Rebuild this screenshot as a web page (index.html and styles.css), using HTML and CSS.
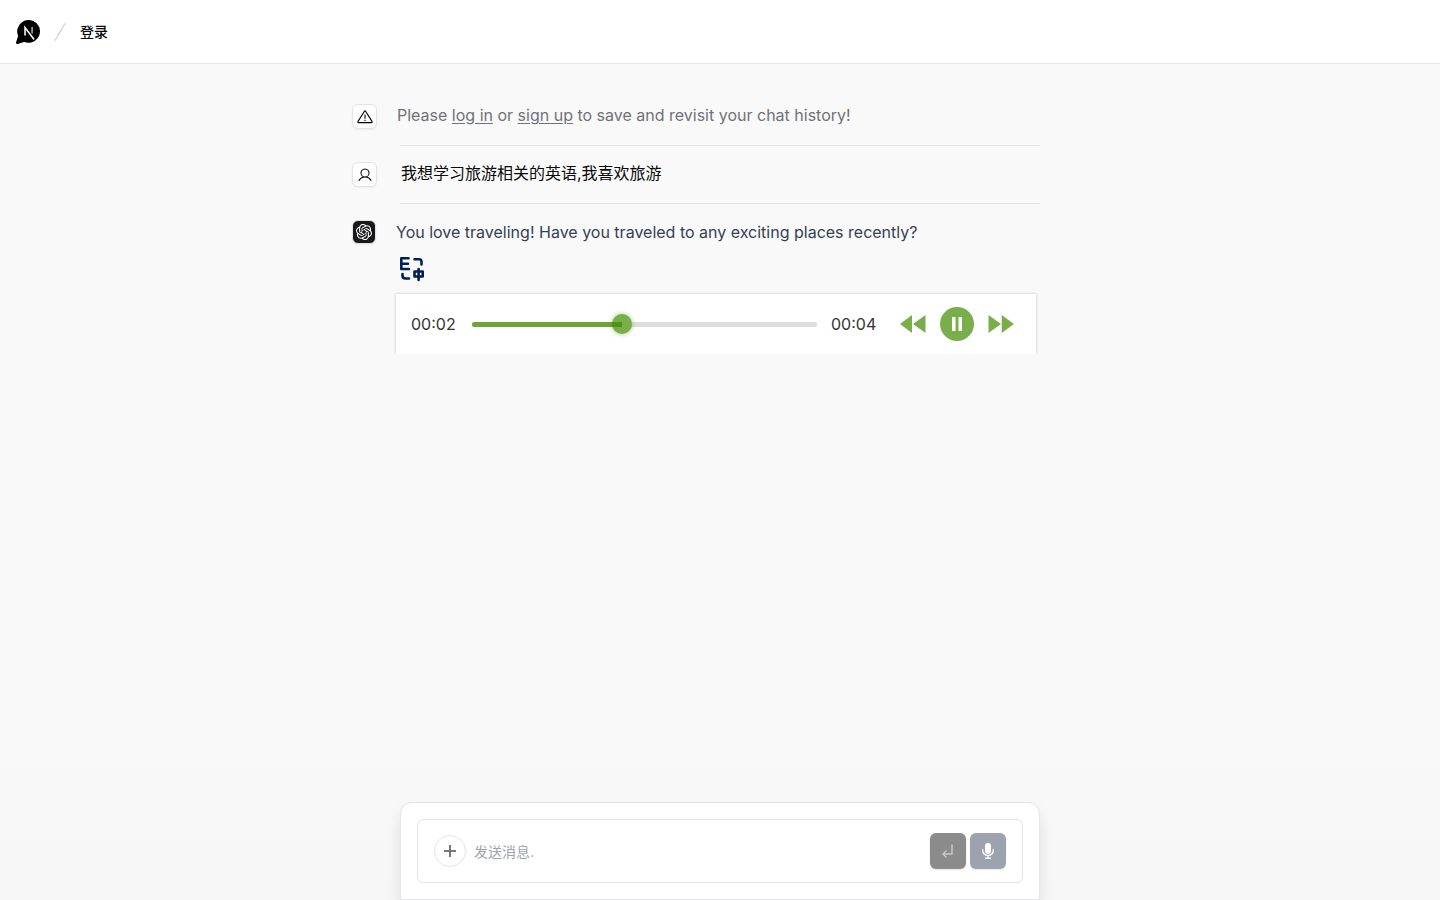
FILE: index.html
```html
<!DOCTYPE html>
<html lang="zh">
<head>
  <meta charset="UTF-8" />
  <meta name="viewport" content="width=device-width, initial-scale=1.0" />
  <title>Chat</title>
  <link rel="stylesheet" href="styles.css">
</head>
<body>
  <header class="header">
    <a href="#" class="logo" aria-label="Home">
      <svg viewBox="0 0 17 17" width="24" height="24">
        <path d="M1 16L2.58314 11.2506C1.83084 9.74642 1.63835 8.02363 2.04013 6.39052C2.4419 4.75741 3.41171 3.32057 4.776 2.33712C6.1403 1.35367 7.81003 0.887808 9.4864 1.02289C11.1628 1.15798 12.7364 1.8852 13.9256 3.07442C15.1148 4.26363 15.842 5.83723 15.9771 7.5136C16.1122 9.18997 15.6463 10.8597 14.6629 12.224C13.6794 13.5883 12.2426 14.5581 10.6095 14.9599C8.97637 15.3616 7.25358 15.1692 5.74942 14.4169L1 16Z" fill="#000" stroke="#000" stroke-width="2" stroke-linecap="round" stroke-linejoin="round"/>
        <path d="M6.4 11V5.4L12.8 13.8" fill="none" stroke="#fff" stroke-width="1.1"/>
        <path d="M11.4 5v4.600" stroke="#aaa" stroke-width="1.1"/>
      </svg>
    </a>
    <svg class="separator" viewBox="0 0 24 24" width="24" height="24">
      <path d="M16.88 3.549L7.12 20.451" stroke="#c3c3c7" stroke-width="1" stroke-linecap="round"/>
    </svg>
    <a href="#" class="login">登录</a>
  </header>

  <main class="chat">
    <div class="message">
      <div class="avatar">
        <svg viewBox="0 0 16 16" width="16" height="16" fill="none" stroke="#000" stroke-width="1.1" stroke-linejoin="round">
          <path d="M7.4 2.2 1 12.400Q.5 13.600 1.700 13.600H14.300Q15.500 13.600 15 12.400L8.600 2.200Q8 1.400 7.400 2.200Z"/>
          <path d="M8 5.500v4.300M8 10.800v1.300"/>
        </svg>
      </div>
      <p class="text muted">Please <a href="#">log in</a> or <a href="#">sign up</a> to save and revisit your chat history!</p>
    </div>
    <hr class="line">
    <div class="message">
      <div class="avatar">
        <svg viewBox="0 0 256 256" width="16" height="16">
          <path d="M230.92 212c-15.23-26.33-38.7-45.21-66.09-54.16a72 72 0 1 0-73.66 0c-27.39 8.94-50.86 27.82-66.09 54.16a8 8 0 1 0 13.85 8c18.84-32.56 52.14-52 89.07-52s70.23 19.44 89.07 52a8 8 0 1 0 13.85-8ZM72 96a56 56 0 1 1 56 56 56.06 56.06 0 0 1-56-56Z"/>
        </svg>
      </div>
      <p class="text question">我想学习旅游相关的英语,我喜欢旅游</p>
    </div>
    <hr class="line">
    <div class="message">
      <div class="avatar bot">
        <svg viewBox="0 0 24 24" width="16" height="16" fill="#fff">
          <path d="M22.2819 9.8211a5.9847 5.9847 0 0 0-.5157-4.9108 6.0462 6.0462 0 0 0-6.5098-2.9A6.0651 6.0651 0 0 0 4.9807 4.1818a5.9847 5.9847 0 0 0-3.9977 2.9 6.0462 6.0462 0 0 0 .7427 7.0966 5.98 5.98 0 0 0 .511 4.9107 6.051 6.051 0 0 0 6.5146 2.9001A5.9847 5.9847 0 0 0 13.2599 24a6.0557 6.0557 0 0 0 5.7718-4.2058 5.9894 5.9894 0 0 0 3.9977-2.9001 6.0557 6.0557 0 0 0-.7475-7.0729zm-9.022 12.6081a4.4755 4.4755 0 0 1-2.8764-1.0408l.1419-.0804 4.7783-2.7582a.7948.7948 0 0 0 .3927-.6813v-6.7369l2.02 1.1686a.071.071 0 0 1 .038.052v5.5826a4.504 4.504 0 0 1-4.4945 4.4944zm-9.6607-4.1254a4.4708 4.4708 0 0 1-.5346-3.0137l.142.0852 4.783 2.7582a.7712.7712 0 0 0 .7806 0l5.8428-3.3685v2.3324a.0804.0804 0 0 1-.0332.0615L9.74 19.9502a4.4992 4.4992 0 0 1-6.1408-1.6464zM2.3408 7.8956a4.485 4.485 0 0 1 2.3655-1.9728V11.6a.7664.7664 0 0 0 .3879.6765l5.8144 3.3543-2.0201 1.1685a.0757.0757 0 0 1-.071 0l-4.8303-2.7865A4.504 4.504 0 0 1 2.3408 7.872zm16.5963 3.8558L13.1038 8.364 15.1192 7.2a.0757.0757 0 0 1 .071 0l4.8303 2.7913a4.4944 4.4944 0 0 1-.6765 8.1042v-5.6772a.79.79 0 0 0-.407-.667zm2.0107-3.0231l-.142-.0852-4.7735-2.7818a.7759.7759 0 0 0-.7854 0L9.409 9.2297V6.8974a.0662.0662 0 0 1 .0284-.0615l4.8303-2.7866a4.4992 4.4992 0 0 1 6.6802 4.66zM8.3065 12.863l-2.02-1.1638a.0804.0804 0 0 1-.038-.0567V6.0742a4.4992 4.4992 0 0 1 7.3757-3.4537l-.142.0805L8.704 5.459a.7948.7948 0 0 0-.3927.6813zm1.0976-2.3654l2.602-1.4998 2.6069 1.4998v2.9994l-2.5974 1.4997-2.6067-1.4997Z"/>
        </svg>
      </div>
      <div class="reply">
        <p class="text answer">You love traveling! Have you traveled to any exciting places recently?</p>
        <button class="translate" aria-label="Translate">
          <svg viewBox="0 0 26 26" width="26" height="26" fill="none" stroke="#001f57" stroke-width="2.6" stroke-linecap="round" stroke-linejoin="round">
            <path d="M9.500 2.300H2.300V13H10M2.300 7.700H9"/>
            <path d="M15.500 3.200H20Q22.500 3.200 22.500 5.700V8.500"/>
            <path d="M3.500 18V19.500Q3.500 22.500 6.500 22.500H10"/>
            <path d="M15.500 15.500H23.700V20.500H15.500ZM19.600 13V24"/>
          </svg>
        </button>
        <div class="player">
          <span class="time">00:02</span>
          <input type="range" class="seek" min="0" max="1000" value="432" aria-label="Seek">
          <span class="time">00:04</span>
          <div class="controls">
            <button aria-label="Rewind">
              <svg viewBox="0 0 26 18" width="26" height="18"><path d="M12 0v18L0 9ZM25.500 0v18L13 9Z"/></svg>
            </button>
            <button aria-label="Pause">
              <svg viewBox="0 0 34 34" width="34" height="34"><circle cx="17" cy="17" r="17"/><path d="M12 10h3.500v14H12ZM18.500 10H22v14h-3.500Z" fill="#fff"/></svg>
            </button>
            <button aria-label="Forward">
              <svg viewBox="0 0 26 18" width="26" height="18"><path d="M.5 0v18L13 9ZM13.700 0v18L26 9Z"/></svg>
            </button>
          </div>
        </div>
      </div>
    </div>
  </main>

  <footer class="panel">
    <form class="prompt">
      <button type="button" class="add" aria-label="New chat">
        <svg viewBox="0 0 16 16" width="16" height="16"><path d="M8 2v12M2 8h12" stroke="#777" stroke-width="2"/></svg>
      </button>
      <input type="text" class="field" placeholder="发送消息." aria-label="发送消息">
      <button type="submit" class="send" aria-label="Send" disabled>
        <svg viewBox="0 0 256 256" width="16" height="16" fill="#d0d0d0" stroke="#d0d0d0" stroke-width="6"><path d="M200 32v144a8 8 0 0 1-8 8H67.31l34.35 34.34a8 8 0 0 1-11.32 11.32l-48-48a8 8 0 0 1 0-11.32l48-48a8 8 0 0 1 11.32 11.32L67.31 168H184V32a8 8 0 0 1 16 0Z"/></svg>
      </button>
      <button type="button" class="mic" aria-label="Voice">
        <svg viewBox="0 0 16 18" width="16" height="18" fill="none" stroke="#fff" stroke-width="1.400">
          <rect x="5" y="1" width="6" height="11" rx="3" fill="#fff" stroke="none"/>
          <path d="M2.700 7v1.500a5.300 5 0 0 0 10.600 0V7M8 13.500V16M5 16.300h6"/>
        </svg>
      </button>
    </form>
  </footer>
</body>
</html>
```

FILE: styles.css
```css
* {
  box-sizing: border-box;
}

body {
  margin: 0;
  min-height: 100vh;
  display: flex;
  flex-direction: column;
  font-family: Inter, "Noto Sans CJK SC", sans-serif;
  font-size: 16px;
  color: #09090b;
  background: linear-gradient(to top, #f7f7f7, #f9f9f9 200px);
}

button {
  display: flex;
  align-items: center;
  justify-content: center;
  padding: 0;
  border: none;
  background: none;
  cursor: pointer;
}

svg {
  display: block;
  flex-shrink: 0;
}

.header {
  display: flex;
  align-items: center;
  height: 64px;
  padding: 0 16px;
  background: #fff;
  border-bottom: 1px solid #e4e4e7;
}

.separator {
  margin: 0 8px;
}

.login {
  font-size: 14px;
  line-height: 20px;
  font-weight: 500;
  color: #09090b;
  text-decoration: none;
}

/* messages, avatars hang 48px left of the text column */
.chat {
  width: 100%;
  max-width: 736px;
  margin: 0 auto;
  padding: 40px 48px 40px 0;
}

.message {
  display: flex;
  align-items: flex-start;
}

.avatar {
  display: flex;
  align-items: center;
  justify-content: center;
  flex-shrink: 0;
  width: 25px;
  height: 25px;
  margin-right: 20px;
  background: #fff;
  border: 1px solid #e4e4e7;
  border-radius: 6px;
  box-shadow: 0 1px 2px rgba(0, 0, 0, 0.05);
}

.bot {
  width: 24px;
  height: 24px;
  background: #18181b;
}

.text {
  margin: 0;
  line-height: 22px;
}

.muted,
.muted a {
  color: #71717a;
}

.muted a {
  text-underline-offset: 2px;
}

.question {
  padding-left: 4px;
}

.line {
  height: 1px;
  margin: 16px 0 16px 48px;
  border: none;
  background: #e4e4e7;
}

.reply {
  flex: 1;
  min-width: 0;
}

.answer {
  line-height: 24px;
  color: #334155;
}

.translate {
  margin: 12px 0 12px 3px;
}

/* audio player */
.player {
  display: flex;
  align-items: center;
  height: 60px;
  margin-right: 4px;
  padding: 0 22px 0 15px;
  background: #fff;
  box-shadow: 0 0 3px rgba(0, 0, 0, 0.2);
  clip-path: inset(-3px -3px 0 -3px);
}

.time {
  min-width: 47px;
  color: #333;
}

.seek {
  --done: calc(10px + (100% - 20px) * 0.432);
  flex: 1;
  min-width: 0;
  height: 20px;
  margin: 0 14px;
  appearance: none;
  background: none;
}

.seek::-webkit-slider-runnable-track {
  height: 5px;
  border-radius: 2px;
  background: linear-gradient(to right, #6fa43c var(--done), #ddd var(--done));
}

.seek::-webkit-slider-thumb {
  appearance: none;
  width: 20px;
  height: 20px;
  margin-top: -8px;
  border-radius: 50%;
  background: linear-gradient(#4b9512, #4b9512) 0 8px / 10px 5px no-repeat, #7aae4b;
  box-shadow: 0 0 5px rgba(68, 143, 0, 0.5);
}

.controls {
  display: flex;
  align-items: center;
  gap: 14px;
  margin-left: 22px;
  fill: #7aae4b;
}

/* prompt */
.panel {
  width: 100%;
  max-width: 640px;
  margin: auto auto 0;
  padding: 16px;
  background: #fff;
  border: 1px solid #e4e4e7;
  border-radius: 12px 12px 0 0;
  box-shadow: 0 10px 15px rgba(0, 0, 0, 0.1);
}

.prompt {
  display: flex;
  align-items: center;
  height: 64px;
  padding: 0 16px;
  border: 1px solid #e4e4e7;
  border-radius: 6px;
}

.add {
  width: 32px;
  height: 32px;
  border: 1px solid #e4e4e7;
  border-radius: 50%;
}

.field {
  flex: 1;
  min-width: 0;
  padding: 0 8px;
  border: none;
  outline: none;
  font: inherit;
  font-size: 14px;
}

.field::placeholder {
  color: #9ca3af;
}

.send,
.mic {
  width: 36px;
  height: 36px;
  border-radius: 6px;
  box-shadow: 0 1px 2px rgba(0, 0, 0, 0.1);
}

.send {
  margin-right: 4px;
  background: #8b8b8c;
}

.mic {
  background: #9ca3af;
}
```
